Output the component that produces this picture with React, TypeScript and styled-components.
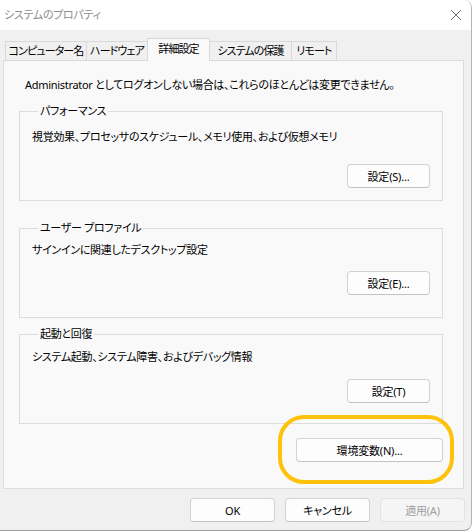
import React from 'react';
import styled, { createGlobalStyle } from 'styled-components';

const GlobalStyle = createGlobalStyle`
	html, body {
		margin: 0;
		padding: 0;
		background: #ffffff;
	}
	body {
		font-family: 'Noto Sans', 'Noto Sans CJK JP', sans-serif;
		font-size: 11px;
		letter-spacing: -0.3px;
		color: #000000;
		font-feature-settings: 'palt';
	}
`;

type GroupSpec = {
	title: string;
	desc: string;
	button: string;
	pad: [number, number, number];
	gapBefore: number;
};

const tabs = [
	{ label: 'コンピューター名', w: 82 },
	{ label: 'ハードウェア', w: 62 },
	{ label: '詳細設定', w: 63 },
	{ label: 'システムの保護', w: 83 },
	{ label: 'リモート', w: 46 },
];

const groups: GroupSpec[] = [
	{ title: 'パフォーマンス', desc: '視覚効果、プロセッサのスケジュール、メモリ使用、および仮想メモリ', button: '設定(S)...', pad: [10, 19, 12], gapBefore: 10 },
	{ title: 'ユーザー プロファイル', desc: 'サインインに関連したデスクトップ設定', button: '設定(E)...', pad: [6, 13, 22], gapBefore: 19 },
	{ title: '起動と回復', desc: 'システム起動、システム障害、およびデバッグ情報', button: '設定(T)', pad: [7, 14, 20], gapBefore: 8 },
];

const App: React.FC = () => {
	return (
		<>
			<GlobalStyle />
			<Window>
				<TitleBar>
					<Title>システムのプロパティ</Title>
					<CloseIcon width="12" height="12" viewBox="0 0 12 12">
						<path d="M1 1 L11 11 M11 1 L1 11" stroke="#6e6e6e" strokeWidth="1" fill="none" />
					</CloseIcon>
				</TitleBar>
				<Body>
					<TabStrip>
						{tabs.map((t, i) => (
							<Tab key={t.label} $w={t.w} $active={i === 2}>
								{t.label}
							</Tab>
						))}
					</TabStrip>
					<Panel>
						<Notice>Administrator としてログオンしない場合は、これらのほとんどは変更できません。</Notice>
						{groups.map((g) => (
							<Group key={g.title} $pad={g.pad} $gap={g.gapBefore}>
								<Legend>{g.title}</Legend>
								<Desc $gap={g.pad[1]}>{g.desc}</Desc>
								<ButtonRow>
									<Button $w={83}>{g.button}</Button>
								</ButtonRow>
							</Group>
						))}
						<EnvRow>
							<Highlighted>
								<Button $w={147}>環境変数(N)...</Button>
								<Ring />
							</Highlighted>
						</EnvRow>
					</Panel>
					<Footer>
						<Button $w={85}>OK</Button>
						<Button $w={85}>キャンセル</Button>
						<Button $w={85} disabled>
							適用(A)
						</Button>
					</Footer>
				</Body>
			</Window>
		</>
	);
};

const Window = styled.div`
	width: 472px;
	height: 531px;
	box-sizing: border-box;
	background: #f0f0f0;
	border-right: 1px solid #b4b4b4;
	border-bottom: 1px solid #9c9c9c;
	border-radius: 0 8px 8px 0;
	overflow: hidden;
	display: flex;
	flex-direction: column;
`;

const TitleBar = styled.div`
	height: 30px;
	flex: none;
	background: #ffffff;
	display: flex;
	align-items: center;
	justify-content: space-between;
	padding: 0 9px 0 4px;
`;

const Title = styled.span`
	color: #8c8c8c;
	line-height: 16px;
`;

const CloseIcon = styled.svg`
	display: block;
	margin-top: -1px;
`;

const Body = styled.div`
	padding: 8px 6px 0 3px;
	display: flex;
	flex-direction: column;
`;

const TabStrip = styled.div`
	display: flex;
	align-items: flex-end;
	margin-left: 2px;
	margin-bottom: -1px;
	position: relative;
	z-index: 1;
`;

const Tab = styled.div<{ $w: number; $active?: boolean }>`
	width: ${(p) => p.$w}px;
	height: ${(p) => (p.$active ? 23 : 20)}px;
	box-sizing: border-box;
	margin-left: -1px;
	border: 1px solid #d9d9d9;
	border-bottom: ${(p) => (p.$active ? 'none' : '1px solid #d9d9d9')};
	background: ${(p) => (p.$active ? '#f9f9f9' : '#f0f0f0')};
	display: flex;
	align-items: center;
	justify-content: center;
	padding-bottom: ${(p) => (p.$active ? 2 : 0)}px;
	line-height: 16px;
	letter-spacing: -0.9px;
	white-space: nowrap;
	&:first-child {
		margin-left: 0;
	}
`;

const Panel = styled.div`
	width: 461px;
	height: 429px;
	box-sizing: border-box;
	background: #f9f9f9;
	border: 1px solid #dcdcdc;
	padding: 16px 20px 0 15px;
	display: flex;
	flex-direction: column;
`;

const Notice = styled.div`
	line-height: 16px;
	padding-left: 6px;
	white-space: nowrap;
`;

const Group = styled.fieldset<{ $pad: [number, number, number]; $gap: number }>`
	margin: ${(p) => p.$gap}px 0 0 0;
	padding: ${(p) => `${p.$pad[0]}px 12px ${p.$pad[2]}px 12px`};
	border: 1px solid #dcdcdc;
	min-width: 0;
	display: flex;
	flex-direction: column;
`;

const Legend = styled.legend`
	margin-left: 6px;
	padding: 0 2px;
	line-height: 16px;
`;

const Desc = styled.div<{ $gap: number }>`
	line-height: 16px;
	margin-bottom: ${(p) => p.$gap}px;
	white-space: nowrap;
`;

const ButtonRow = styled.div`
	display: flex;
	justify-content: flex-end;
`;

const Button = styled.button<{ $w: number }>`
	width: ${(p) => p.$w}px;
	height: 24px;
	box-sizing: border-box;
	background: #fdfdfd;
	border: 1px solid #d2d2d2;
	border-bottom-color: #c2c2c2;
	border-radius: 4px;
	font-family: inherit;
	font-size: 11px;
	letter-spacing: -0.2px;
	font-feature-settings: 'palt';
	color: #000000;
	padding: 0;
	&:disabled {
		background: #f5f5f5;
		border-color: #e2e2e2;
		color: #a0a0a0;
	}
`;

const EnvRow = styled.div`
	margin-top: 14px;
	display: flex;
	justify-content: flex-end;
`;

const Highlighted = styled.div`
	position: relative;
	display: flex;
`;

const Ring = styled.div`
	position: absolute;
	left: -18px;
	right: -11px;
	top: -23px;
	bottom: -22px;
	border: 4px solid #ffc20a;
	border-radius: 26px;
	pointer-events: none;
`;

const Footer = styled.div`
	display: flex;
	justify-content: flex-end;
	gap: 10px;
	padding-top: 9px;
`;

export default App;
